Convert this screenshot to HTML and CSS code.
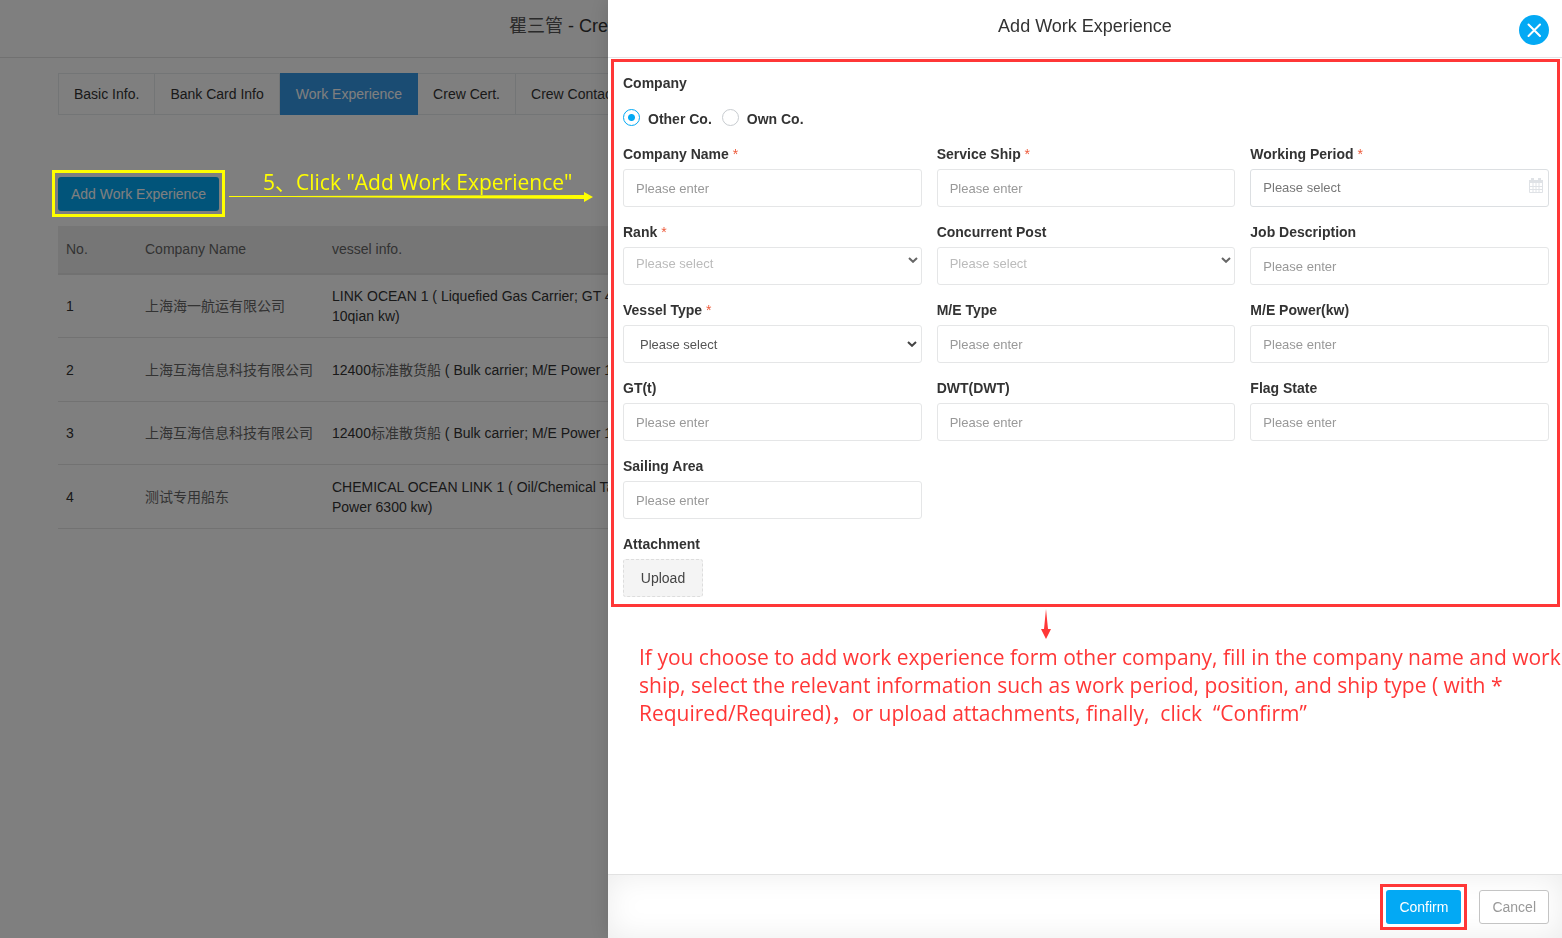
FILE: index.html
```html
<!DOCTYPE html>
<html lang="en">
<head>
<meta charset="utf-8">
<title>Add Work Experience</title>
<link rel="stylesheet" href="styles.css">
</head>
<body>
<div class="page">
  <header class="page-header"><h1 class="page-title"><span class="cjk-title">瞿三管</span> - Crew</h1></header>
  <main class="page-body">
    <nav class="tabs">
      <a class="tab" href="#">Basic Info.</a>
      <a class="tab" href="#">Bank Card Info</a>
      <a class="tab tab-active" href="#">Work Experience</a>
      <a class="tab" href="#">Crew Cert.</a>
      <a class="tab" href="#">Crew Contac</a>
    </nav>
    <button class="btn btn-primary add-btn" type="button">Add Work Experience</button>
    <table class="table">
      <thead>
        <tr><th class="col-no">No.</th><th class="col-company">Company Name</th><th>vessel info.</th></tr>
      </thead>
      <tbody>
        <tr><td>1</td><td class="cjk">上海海一航运有限公司</td><td>LINK OCEAN 1 ( Liquefied Gas Carrier; GT 4<br>10qian kw)</td></tr>
        <tr><td>2</td><td class="cjk">上海互海信息科技有限公司</td><td>12400<span class="cjk">标准散货船</span> ( Bulk carrier; M/E Power 1</td></tr>
        <tr><td>3</td><td class="cjk">上海互海信息科技有限公司</td><td>12400<span class="cjk">标准散货船</span> ( Bulk carrier; M/E Power 1</td></tr>
        <tr><td>4</td><td class="cjk">测试专用船东</td><td>CHEMICAL OCEAN LINK 1 ( Oil/Chemical Ta<br>Power 6300 kw)</td></tr>
      </tbody>
    </table>
  </main>
</div>

<div class="overlay">
  <div class="backdrop">
    <div class="mark-box"></div>
    <p class="mark-text">5、Click "Add Work Experience"</p>
    <svg class="mark-arrow" width="364" height="10" viewBox="0 0 364 10" aria-hidden="true"><path d="M0 4H60L355 3V0L364 5L355 10V7L60 5H0Z" fill="#ff0"/></svg>
  </div>

  <section class="drawer">
    <header class="drawer-header">
      <h2 class="drawer-title">Add Work Experience</h2>
      <button class="close" type="button" aria-label="Close"><svg width="30" height="30" viewBox="0 0 30 30"><path d="M9.500 9.500L21 21M21 9.500L9.500 21" stroke="#fff" stroke-width="2" stroke-linecap="round"/></svg></button>
    </header>

    <div class="drawer-body">
      <form class="form">
        <fieldset class="company">
          <legend class="label">Company</legend>
          <div class="radios">
            <label class="radio"><input type="radio" name="co" checked>Other Co.</label>
            <label class="radio"><input type="radio" name="co">Own Co.</label>
          </div>
        </fieldset>
        <div class="grid">
          <div class="field"><label class="label" for="f1">Company Name <span class="req">*</span></label><input class="control" id="f1" type="text" placeholder="Please enter"></div>
          <div class="field"><label class="label" for="f2">Service Ship <span class="req">*</span></label><input class="control" id="f2" type="text" placeholder="Please enter"></div>
          <div class="field"><label class="label" for="f3">Working Period <span class="req">*</span></label>
            <div class="wrap"><input class="control control-date" id="f3" type="text" placeholder="Please select"><svg class="calendar" width="14" height="15" viewBox="0 0 14 15" aria-hidden="true"><path d="M0.500 2.500H13.500V14.500H0.500Z" fill="none" stroke="#dfe2e6"/><path d="M0 2H14V5H0ZM2 0H5V4H2ZM9 0H12V4H9Z" fill="#dfe2e6"/><path d="M1 8.500H13M1 11.500H13M4 5V14M7 5V14M10 5V14" stroke="#dfe2e6"/></svg></div></div>
          <div class="field"><label class="label" for="f4">Rank <span class="req">*</span></label>
            <div class="wrap"><select class="control select-muted" id="f4"><option>Please select</option></select><svg class="chevron chevron-high" width="10" height="6" viewBox="0 0 10 6" aria-hidden="true"><path d="M1 1L5 4.800L9 1" fill="none" stroke="#666" stroke-width="2"/></svg></div></div>
          <div class="field"><label class="label" for="f5">Concurrent Post</label>
            <div class="wrap"><select class="control select-muted" id="f5"><option>Please select</option></select><svg class="chevron chevron-high" width="10" height="6" viewBox="0 0 10 6" aria-hidden="true"><path d="M1 1L5 4.800L9 1" fill="none" stroke="#666" stroke-width="2"/></svg></div></div>
          <div class="field"><label class="label" for="f6">Job Description</label><input class="control" id="f6" type="text" placeholder="Please enter"></div>
          <div class="field"><label class="label" for="f7">Vessel Type <span class="req">*</span></label>
            <div class="wrap"><select class="control select-plain" id="f7"><option>Please select</option></select><svg class="chevron" width="10" height="6" viewBox="0 0 10 6" aria-hidden="true"><path d="M1 1L5 4.800L9 1" fill="none" stroke="#444" stroke-width="2"/></svg></div></div>
          <div class="field"><label class="label" for="f8">M/E Type</label><input class="control" id="f8" type="text" placeholder="Please enter"></div>
          <div class="field"><label class="label" for="f9">M/E Power(kw)</label><input class="control" id="f9" type="text" placeholder="Please enter"></div>
          <div class="field"><label class="label" for="f10">GT(t)</label><input class="control" id="f10" type="text" placeholder="Please enter"></div>
          <div class="field"><label class="label" for="f11">DWT(DWT)</label><input class="control" id="f11" type="text" placeholder="Please enter"></div>
          <div class="field"><label class="label" for="f12">Flag State</label><input class="control" id="f12" type="text" placeholder="Please enter"></div>
          <div class="field field-first"><label class="label" for="f13">Sailing Area</label><input class="control" id="f13" type="text" placeholder="Please enter"></div>
          <div class="field field-first"><label class="label" for="f14">Attachment</label><button class="upload" id="f14" type="button">Upload</button></div>
        </div>
      </form>
      <svg class="note-arrow" width="10" height="30" viewBox="0 0 10 30" aria-hidden="true"><path d="M5 0L7 20H10L5 30L0 20H3Z" fill="#ff3737"/></svg>
      <p class="note">If you choose to add work experience form other company, fill in the company name and work<br>ship, select the relevant information such as work period, position, and ship type ( with *<br>Required/Required)，or upload attachments, finally,&nbsp; click&nbsp; “Confirm”</p>
    </div>

    <footer class="drawer-footer">
      <div class="confirm-mark"><button class="btn btn-primary" type="button">Confirm</button></div>
      <button class="btn btn-default" type="button">Cancel</button>
    </footer>
  </section>
</div>
</body>
</html>
```
FILE: styles.css
```css
* { box-sizing: border-box; }

body {
  margin: 0;
  background: #fff;
  color: #333;
  font: 14px/20px "Liberation Sans", Arial, "Noto Sans CJK SC", sans-serif;
}

h1, h2, p { margin: 0; font-weight: 400; }

button, input, select { font-family: inherit; }

/* Page behind the drawer */
.page { min-height: 100vh; overflow: hidden; }

.page-header {
  height: 58px;
  padding: 13px 0 0 509px;
  border-bottom: 1px solid #e2e2e2;
}

.page-title { font-size: 18px; line-height: 26px; white-space: nowrap; }

.page-body { padding: 15px 58px; }

.tabs { display: flex; border: 1px solid #e7eaec; height: 42px; }

.tab {
  padding: 10px 15px;
  border-right: 1px solid #e7eaec;
  color: #333;
  text-decoration: none;
  white-space: nowrap;
}

.tab-active {
  margin: -1px 0;
  padding: 11px 15px 11px 16px;
  border-color: #3598e6;
  background: #3598e6;
  color: #fff;
}

.btn {
  height: 34px;
  padding: 0 12px;
  border: 1px solid transparent;
  border-radius: 3px;
  font-size: 14px;
  line-height: 20px;
}

.btn-primary { background: #03a9f4; color: #fff; }
.btn-default { border-color: #c4c4c4; background: #fff; color: #999; }

.add-btn { display: block; margin: 62px 0 15px; }

.table { width: 100%; border-collapse: separate; border-spacing: 0; table-layout: fixed; }
.table th, .table td { padding: 0 8px; text-align: left; white-space: nowrap; }
.table th { height: 49px; padding-bottom: 2px; background: #ededed; border-bottom: 2px solid #e2e2e2; color: #666; font-weight: 400; }
.table td { height: 63px; border-bottom: 1px solid #e4e4e4; }
.table tr:nth-child(even) td { height: 64px; }
.table .col-no { width: 79px; }
.table .col-company { width: 187px; }
.cjk { color: #666; }
.cjk-title { color: #555; }

/* Overlay: dimmed backdrop and drawer side by side */
.overlay {
  position: fixed;
  inset: 0;
  display: grid;
  grid-template-columns: minmax(0, 608px) minmax(0, 1fr);
}

.backdrop { position: relative; background: rgba(0, 0, 0, .5); }

.mark-box { position: absolute; left: 52px; top: 170px; width: 173px; height: 47px; border: 3px solid #ff0; }

.mark-text {
  position: absolute;
  left: 263px;
  top: 168px;
  color: #ff0;
  font: 21px/28px "Open Sans", "Noto Sans CJK SC", sans-serif;
  white-space: nowrap;
}

.mark-arrow { position: absolute; left: 229px; top: 192px; }

.drawer {
  position: relative;
  display: flex;
  flex-direction: column;
  background: #fff;
  box-shadow: 0 0 20px rgba(0, 0, 0, .15);
}

.drawer-header { position: relative; height: 58px; border-bottom: 1px solid #e2e5e8; }
.drawer-title { padding-top: 13px; font-size: 18px; line-height: 26px; text-align: center; }

.close {
  position: absolute;
  top: 15px;
  right: 13px;
  width: 30px;
  height: 30px;
  padding: 0;
  border: 0;
  border-radius: 50%;
  background: #03a9f4;
}

.close svg { display: block; }

.drawer-body { flex: 1; min-height: 0; padding: 1px 2px 0 3px; }

.form { padding: 11px 8px 7px 9px; border: 3px solid #ff3737; }

.company { margin: 0; padding: 0; border: 0; }
.label { display: block; padding: 0; color: #333; font-weight: 700; line-height: 20px; }
.req { color: #ed5a3a; font-weight: 400; }

.radios { display: flex; gap: 10px; height: 51px; padding-top: 16px; }
.radio { display: flex; align-items: flex-start; gap: 8px; font-weight: 700; line-height: 20px; }

.radio input {
  appearance: none;
  width: 17px;
  height: 17px;
  margin: 0;
  border: 1px solid #c8ccd0;
  border-radius: 50%;
}

.radio input:checked { border-color: #03a9f4; background: radial-gradient(circle, #03a9f4 3px, #fff 4px); }

.grid { display: grid; grid-template-columns: repeat(3, minmax(0, 1fr)); gap: 15px; }
.field { display: flex; flex-direction: column; align-items: stretch; gap: 5px; }
.field-first { grid-column: 1; }
.wrap { position: relative; display: flex; }

.control {
  appearance: none;
  width: 100%;
  height: 38px;
  padding: 0 12px;
  border: 1px solid #e5e6e7;
  border-radius: 3px;
  background: #fff;
  color: #555;
  font-size: 13px;
}

.control::placeholder { color: #999; opacity: 1; }
.control-date { border-color: #dcdfe2; padding-bottom: 2px; }
.control-date::placeholder { color: #777; }
.select-muted { padding-bottom: 5px; color: #bbb; }
.select-plain { padding-left: 16px; color: #555; }

.chevron { position: absolute; right: 5px; top: 16px; }
.chevron-high { right: 4px; top: 10px; }
.calendar { position: absolute; right: 6px; top: 9px; }

.upload {
  align-self: flex-start;
  width: 80px;
  height: 38px;
  border: 1px dashed #ddd;
  border-radius: 3px;
  background: #f4f4f4;
  color: #444;
  font-size: 14px;
}

.note-arrow { display: block; margin: 2px auto 0 430px; }

.note {
  padding: 4px 0 0 28px;
  color: #ff3737;
  font: 21px/28px "Open Sans", "Noto Sans CJK SC", sans-serif;
  white-space: nowrap;
}

.drawer-footer {
  display: flex;
  justify-content: flex-end;
  align-items: center;
  gap: 12px;
  height: 64px;
  padding: 1px 13px 0;
  border-top: 1px solid #e2e2e2;
  box-shadow: inset 0 0 30px rgba(0, 0, 0, .08);
}

.confirm-mark { display: flex; padding: 3px; border: 3px solid #ff3737; background: #fff; }
```
